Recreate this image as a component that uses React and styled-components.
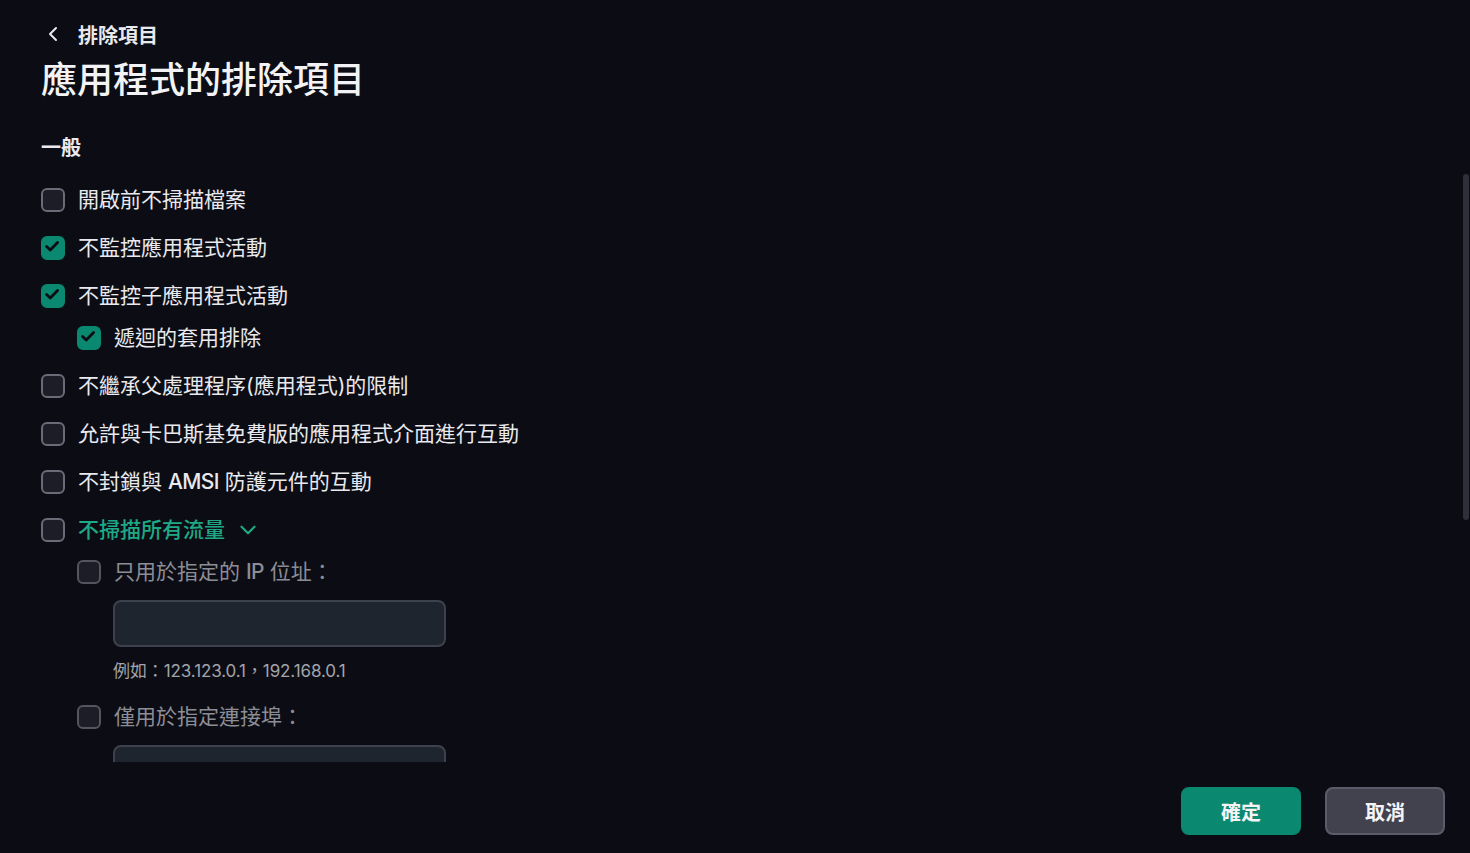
import React from "react";
import styled, { createGlobalStyle } from "styled-components";
import { ChevronLeft, ChevronDown } from "lucide-react";

const BG = "#0c0d14";
const TEAL = "#0a8870";
const LINK = "#1fa886";
const TEXT = "#e9e9ee";
const MUTED = "#8c8d96";

const GlobalStyle = createGlobalStyle`
  html, body {
    margin: 0;
    padding: 0;
    background: ${BG};
  }
  body {
    font-family: Inter, "Noto Sans CJK TC", "Noto Sans", sans-serif;
    color: ${TEXT};
    overflow: hidden;
  }
`;

const Page = styled.div`
  position: relative;
  height: 100vh;
  display: flex;
  flex-direction: column;
  background: ${BG};
`;

const ScrollArea = styled.div`
  flex: 1;
  overflow: hidden;
  padding: 22px 41px 0;
`;

const BackLink = styled.div`
  display: flex;
  align-items: center;
  gap: 13px;
  height: 24px;
  font-size: 20px;
  font-weight: 700;
  color: ${TEXT};
  cursor: pointer;
`;

const Title = styled.h1`
  margin: 10px 0 0;
  font-size: 36px;
  line-height: 48px;
  font-weight: 500;
  color: #f3f3f6;
`;

const Section = styled.h2`
  margin: 32px 0 0;
  font-size: 20px;
  line-height: 24px;
  font-weight: 700;
  color: ${TEXT};
`;

const List = styled.div`
  margin-top: 28px;
  display: flex;
  flex-direction: column;
  gap: 24px;
`;

const SubList = styled.div`
  margin-top: ${(p) => p.$gap || 18}px;
  padding-left: 36px;
  display: flex;
  flex-direction: column;
`;

const Row = styled.label`
  display: flex;
  align-items: center;
  gap: 13px;
  height: 24px;
  line-height: 24px;
  font-size: 21px;
  color: ${(p) => (p.$disabled ? MUTED : p.$link ? LINK : TEXT)};
  font-weight: ${(p) => (p.$link ? 500 : 400)};
  white-space: nowrap;
`;

const Label = styled.span`
  display: block;
`;

const Latin = styled.span`
  font-weight: 500;
  letter-spacing: -0.6px;
`;

const Box = styled.span`
  box-sizing: border-box;
  flex: none;
  width: 24px;
  height: 24px;
  border-radius: 6px;
  display: flex;
  align-items: center;
  justify-content: center;
  background: ${(p) => (p.$checked ? TEAL : "#1d1d28")};
  border: 2px solid
    ${(p) => (p.$checked ? TEAL : p.$disabled ? "#54555f" : "#6a6b77")};
`;

const Expand = styled(ChevronDown)`
  margin-left: -3px;
  color: ${LINK};
`;

const Field = styled.div`
  box-sizing: border-box;
  margin: 16px 0 0 72px;
  width: 333px;
  height: 47px;
  background: #1f252e;
  border: 2px solid #3c424d;
  border-radius: 8px;
`;

const Hint = styled.div`
  margin: 12px 0 0 72px;
  font-size: 17px;
  line-height: 24px;
  color: #a3a4ab;
  letter-spacing: -0.1px;
`;

const Footer = styled.div`
  flex: none;
  height: 91px;
  box-sizing: border-box;
  padding: 25px 25px 18px;
  display: flex;
  justify-content: flex-end;
  gap: 24px;
`;

const Button = styled.button`
  box-sizing: border-box;
  width: 120px;
  height: 48px;
  border-radius: 8px;
  font-family: inherit;
  font-size: 20px;
  font-weight: 700;
  color: #f4f4f6;
  cursor: pointer;
  background: ${(p) => (p.$primary ? TEAL : "#41424e")};
  border: 2px solid ${(p) => (p.$primary ? TEAL : "#5b5c69")};
`;

const ScrollThumb = styled.div`
  position: absolute;
  right: 1px;
  top: 174px;
  width: 6px;
  height: 346px;
  border-radius: 3px;
  background: #2e2f3b;
`;

function Check() {
  return (
    <svg width="20" height="20" viewBox="0 0 20 20" fill="none">
      <path
        d="M3.6 8.6 7.2 12.1 14.6 4.6"
        stroke="#0c0d14"
        strokeWidth="2.8"
        strokeLinecap="round"
        strokeLinejoin="round"
      />
    </svg>
  );
}

function Option({ checked, disabled, link, expandable, children }) {
  return (
    <Row $disabled={disabled} $link={link}>
      <Box $checked={checked} $disabled={disabled}>
        {checked && <Check />}
      </Box>
      <Label>{children}</Label>
      {expandable && <Expand size={26} strokeWidth={2} />}
    </Row>
  );
}

export default function App() {
  return (
    <>
      <GlobalStyle />
      <Page>
        <ScrollArea>
          <BackLink>
            <ChevronLeft size={24} strokeWidth={2} />
            排除項目
          </BackLink>
          <Title>應用程式的排除項目</Title>
          <Section>一般</Section>
          <List>
            <Option>開啟前不掃描檔案</Option>
            <Option checked>不監控應用程式活動</Option>
            <div>
              <Option checked>不監控子應用程式活動</Option>
              <SubList>
                <Option checked>遞迴的套用排除</Option>
              </SubList>
            </div>
            <Option>不繼承父處理程序(應用程式)的限制</Option>
            <Option>允許與卡巴斯基免費版的應用程式介面進行互動</Option>
            <Option>
              不封鎖與 <Latin>AMSI</Latin> 防護元件的互動
            </Option>
            <div>
              <Option link expandable>
                不掃描所有流量
              </Option>
              <SubList>
                <Option disabled>
                  只用於指定的 <Latin>IP</Latin> 位址：
                </Option>
              </SubList>
              <Field />
              <Hint>例如：123.123.0.1，192.168.0.1</Hint>
              <SubList $gap={22}>
                <Option disabled>僅用於指定連接埠：</Option>
              </SubList>
              <Field />
            </div>
          </List>
        </ScrollArea>
        <Footer>
          <Button $primary>確定</Button>
          <Button>取消</Button>
        </Footer>
        <ScrollThumb />
      </Page>
    </>
  );
}
